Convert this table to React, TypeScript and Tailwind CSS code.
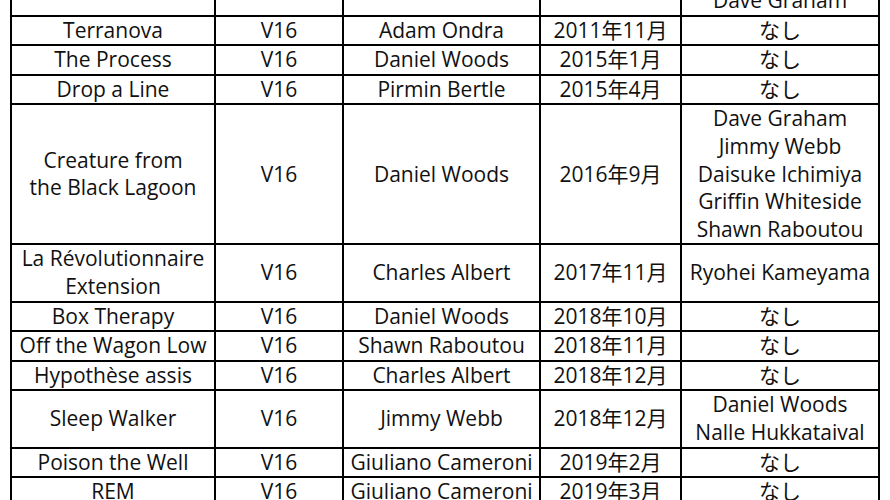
import React from "react";

type Row = { name: string[]; grade: string; fa: string; date: string; rep: string[] };

const rows: Row[] = [
  { name: ["Terranova"], grade: "V16", fa: "Adam Ondra", date: "2011年11月", rep: ["なし"] },
  { name: ["The Process"], grade: "V16", fa: "Daniel Woods", date: "2015年1月", rep: ["なし"] },
  { name: ["Drop a Line"], grade: "V16", fa: "Pirmin Bertle", date: "2015年4月", rep: ["なし"] },
  {
    name: ["Creature from", "the Black Lagoon"],
    grade: "V16",
    fa: "Daniel Woods",
    date: "2016年9月",
    rep: ["Dave Graham", "Jimmy Webb", "Daisuke Ichimiya", "Griffin Whiteside", "Shawn Raboutou"],
  },
  {
    name: ["La Révolutionnaire", "Extension"],
    grade: "V16",
    fa: "Charles Albert",
    date: "2017年11月",
    rep: ["Ryohei Kameyama"],
  },
  { name: ["Box Therapy"], grade: "V16", fa: "Daniel Woods", date: "2018年10月", rep: ["なし"] },
  { name: ["Off the Wagon Low"], grade: "V16", fa: "Shawn Raboutou", date: "2018年11月", rep: ["なし"] },
  { name: ["Hypothèse assis"], grade: "V16", fa: "Charles Albert", date: "2018年12月", rep: ["なし"] },
  {
    name: ["Sleep Walker"],
    grade: "V16",
    fa: "Jimmy Webb",
    date: "2018年12月",
    rep: ["Daniel Woods", "Nalle Hukkataival"],
  },
  { name: ["Poison the Well"], grade: "V16", fa: "Giuliano Cameroni", date: "2019年2月", rep: ["なし"] },
  { name: ["REM"], grade: "V16", fa: "Giuliano Cameroni", date: "2019年3月", rep: ["なし"] },
];

const cell = "border-2 border-black p-0 text-center align-middle whitespace-nowrap";

function Lines({ items }: { items: string[] }) {
  return (
    <>
      {items.map((t, i) => (
        <div key={i}>{t}</div>
      ))}
    </>
  );
}

export default function App() {
  return (
    <div className="w-[890px] h-[500px] overflow-hidden bg-white">
      <table
        className="ml-[10px] -mt-[15px] w-[868px] table-fixed border-collapse text-[21px] leading-[27.6px] text-[#111]"
        style={{ fontFamily: '"Open Sans", "Noto Sans CJK JP", sans-serif' }}
      >
        <colgroup>
          <col className="w-[204px]" />
          <col className="w-[128px]" />
          <col className="w-[197px]" />
          <col className="w-[141px]" />
          <col className="w-[198px]" />
        </colgroup>
        <tbody>
          <tr>
            <td className={cell}></td>
            <td className={cell}></td>
            <td className={cell}></td>
            <td className={cell}></td>
            <td className={cell}>Dave Graham</td>
          </tr>
          {rows.map((r, i) => (
            <tr key={i}>
              <td className={cell}>
                <Lines items={r.name} />
              </td>
              <td className={cell}>{r.grade}</td>
              <td className={cell}>{r.fa}</td>
              <td className={cell}>{r.date}</td>
              <td className={cell}>
                <Lines items={r.rep} />
              </td>
            </tr>
          ))}
        </tbody>
      </table>
    </div>
  );
}
